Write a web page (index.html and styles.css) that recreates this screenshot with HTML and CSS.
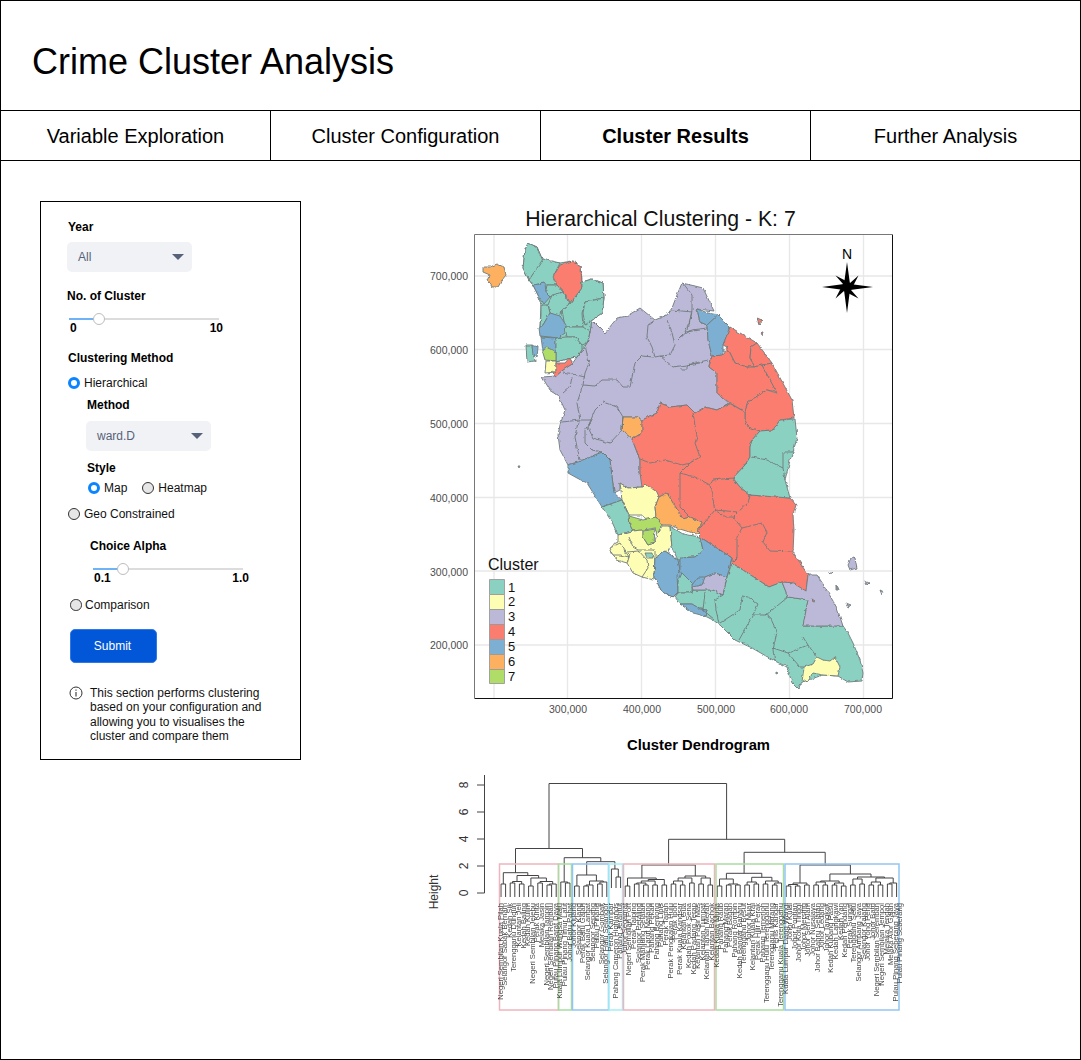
FILE: index.html
```html
<!DOCTYPE html>
<html lang="en">
<head>
<meta charset="utf-8">
<title>Crime Cluster Analysis</title>
<link rel="stylesheet" href="styles.css">
</head>
<body>
<div class="frame">
  <header class="header"><h1>Crime Cluster Analysis</h1></header>
  <nav class="tabs">
    <a class="tab">Variable Exploration</a>
    <a class="tab">Cluster Configuration</a>
    <a class="tab active">Cluster Results</a>
    <a class="tab">Further Analysis</a>
  </nav>
  <main class="main">
    <aside class="side">
      <div class="label nudge">Year</div>
      <div class="select mt8"><span>All</span><i class="caret"></i></div>
      <div class="label mt17 tight">No. of Cluster</div>
      <div class="slider mt10"><div class="fill"></div><div class="knob"></div></div>
      <div class="range"><span>0</span><span>10</span></div>
      <div class="label mt16 nudge">Clustering Method</div>
      <div class="radio-row mt11 nudge"><span class="radio on"></span>Hierarchical</div>
      <div class="indent">
        <div class="label mt8">Method</div>
        <div class="select mt9 shift"><span>ward.D</span><i class="caret"></i></div>
        <div class="label mt10">Style</div>
        <div class="radio-pair mt6">
          <div class="radio-row"><span class="radio on"></span>Map</div>
          <div class="radio-row"><span class="radio"></span>Heatmap</div>
        </div>
      </div>
      <div class="radio-row mt12 nudge"><span class="radio"></span>Geo Constrained</div>
      <div class="alpha">
        <div class="label mt18">Choice Alpha</div>
        <div class="slider mt10 short"><div class="fill"></div><div class="knob"></div></div>
        <div class="range short"><span>0.1</span><span>1.0</span></div>
      </div>
      <div class="radio-row mt13 nudge2"><span class="radio small"></span>Comparison</div>
      <button class="submit mt17" type="button">Submit</button>
      <div class="info mt23">
        <svg class="info-icon" viewBox="0 0 14 14" width="14" height="14"><circle cx="7" cy="7" r="6" fill="none" stroke="#333" stroke-width="1"/><path d="M7 6v4.4M7 3.6v1.2" stroke="#333" stroke-width="1.1" fill="none"/></svg>
        <p>This section performs clustering based on your configuration and allowing you to visualises the cluster and compare them</p>
      </div>
    </aside>
    <section class="charts">
      <svg class="map" viewBox="420 201 500 529" width="500" height="529">
        <defs>
          <filter id="rough" filterUnits="userSpaceOnUse" x="474" y="234" width="418" height="464" color-interpolation-filters="sRGB">
            <feTurbulence type="fractalNoise" baseFrequency="0.22" numOctaves="2" seed="4" result="n"/>
            <feDisplacementMap in="SourceGraphic" in2="n" scale="3.2" xChannelSelector="R" yChannelSelector="G"/>
          </filter>
        </defs>
        <text class="map-title" x="660.5" y="226" text-anchor="middle">Hierarchical Clustering - K: 7</text>
        <rect class="plot-bg" x="474.5" y="234.5" width="418" height="464"/>
        <path class="grid" d="M494 235V698M567.5 235V698M641.5 235V698M715.5 235V698M789.5 235V698M863.5 235V698M475 276H892M475 349.5H892M475 423.5H892M475 497.5H892M475 571H892M475 645H892"/>
        <path class="tick-line" d="M474.5 698V234.5H892"/>
        <path class="axis-line" d="M474.5 698.5H892.5V234.5"/>
        <g class="ticks-y">
          <text x="468" y="280">700,000</text><text x="468" y="354">600,000</text><text x="468" y="428">500,000</text><text x="468" y="502">400,000</text><text x="468" y="576">300,000</text><text x="468" y="649">200,000</text>
        </g>
        <g class="ticks-x">
          <text x="568" y="713">300,000</text><text x="642" y="713">400,000</text><text x="716" y="713">500,000</text><text x="789" y="713">600,000</text><text x="863" y="713">700,000</text>
        </g>
        <g class="regions" filter="url(#rough)">
          <polygon class="c3" points="592,320 605,333 617,318 627,316 640,308 655,320 667,315 672,308 677,295 682,283 695,286 703,288 714,311 697,309 700,322 707,325 708,340 712,356 709,367 717,373 717,393 729,403 717,410 705,407 695,413 687,405 670,407 660,403 657,413 642,420 638,417 623,417 622,430 632,439 640,460 640,473 645,483 642,487 628,488 620,483 620,490 614,493 610,460 602,452 578,462 568,465 560,450 558,435 560,425 565,410 558,395 550,390 542,377 556,376 563,370 572,364 577,357 582,350 587,343 590,332"/>
          <polygon class="c1" points="528,243 537,247 543,261 560,263 572,261 581,266 582,282 592,279 603,283 604,298 602,313 592,320 590,332 587,343 582,350 577,357 570,358 556,362 556,352 541,337 540,327 541,305 538,295 533,285 529,280 523,268 525,250"/>
          <polygon class="c6" points="483,267 490,267 497,264 504,267 506,275 502,280 498,287 492,287 488,280 490,275 483,272"/>
          <polygon class="c1" points="528,243 537,247 543,261 529,280 523,268 525,250"/>
          <polygon class="c1" points="543,259 560,263 554,275 557,285 547,285 545,283 533,285 529,280"/>
          <polygon class="c4" points="572,261 581,266 582,288 570,304 565,293 558,287 553,277 560,265"/>
          <polygon class="c1" points="582,282 592,279 603,283 604,298 585,302 582,313 583,327 565,327 562,310 570,304 582,288"/>
          <polygon class="c1" points="585,302 604,298 602,313 592,320 585,325 583,313"/>
          <polygon class="c1" points="565,327 583,327 590,332 587,343 582,345 575,337 567,337"/>
          <polygon class="c1" points="547,285 557,285 563,292 552,297 545,295"/>
          <polygon class="c1" points="552,295 564,292 569,304 562,310 560,317 550,313 548,305"/>
          <polygon class="c1" points="541,305 548,305 550,313 543,325 540,327 541,315"/>
          <polygon class="c5" points="533,285 545,283 546,293 550,297 544,304 538,295"/>
          <polygon class="c5" points="550,313 560,316 566,325 565,333 558,338 550,337 540,336 539,328 543,325"/>
          <polygon class="c5" points="541,337 556,338 556,352 545,350 543,352"/>
          <polygon class="c1" points="556,338 566,337 575,337 582,345 582,350 577,357 570,358 556,362"/>
          <polygon class="c1" points="526,345 532,345 535,361 527,362"/>
          <polygon class="c5" points="532,345 538,347 537,357 533,356"/>
          <polygon class="c7" points="546,347 556,352 556,361 545,360 543,353"/>
          <polygon class="c2" points="546,361 556,361 556,372 545,373"/>
          <polygon class="c4" points="570,357 572,364 563,370 556,376 553,373 556,371 556,363 565,363"/>
          <polygon class="c6" points="623,417 638,417 642,422 642,433 632,439 622,430"/>
          <polygon class="c5" points="697,309 708,313 718,315 707,325 700,322"/>
          <polygon class="c5" points="718,315 730,327 723,345 723,355 712,356 708,340 707,325"/>
          <polygon class="c4" points="730,327 757,343 751,347 750,358 755,367 747,367 735,363 727,347 723,345"/>
          <polygon class="c4" points="757,343 772,363 762,365 755,367 750,358 751,347"/>
          <polygon class="c4" points="723,355 727,347 735,363 747,367 755,367 762,365 777,392 767,390 748,402 745,412 730,403 717,393 717,373 709,367 712,356"/>
          <polygon class="c4" points="772,363 792,400 794,418 780,420 773,430 760,431 748,427 745,420 745,412 748,402 767,390 777,393 762,365"/>
          <polygon class="c4" points="632,439 642,433 642,420 657,413 660,403 670,407 687,405 695,413 705,407 717,410 729,403 745,412 745,420 748,427 760,431 752,440 750,447 750,457 745,465 733,478 740,487 750,495 790,498 796,505 793,515 794,530 793,552 808,575 806,592 793,583 782,582 769,587 732,563 732,558 700,537 698,530 702,522 690,517 683,519 673,503 667,493 659,497 645,484 642,487 640,473 640,460"/>
          <polygon class="c1" points="760,431 773,430 780,420 795,419 797,438 793,452 790,460 785,480 790,498 750,495 740,487 733,478 745,465 750,457 750,447 752,440"/>
          <polygon class="c5" points="568,467 568,465 578,462 602,452 610,460 614,493 622,500 602,507 587,483 577,478 568,473"/>
          <polygon class="c2" points="620,483 628,488 642,487 645,484 657,492 659,497 655,507 656,517 647,521 643,515 629,515 622,500 621,490"/>
          <polygon class="c6" points="659,497 667,493 673,503 683,519 690,517 702,522 698,530 700,535 683,530 670,525 662,525 656,517 655,507"/>
          <polygon class="c1" points="602,507 622,500 629,515 630,525 633,531 618,535 612,522"/>
          <polygon class="c7" points="629,516 643,520 656,517 662,525 657,535 655,528 643,530 633,531 630,525"/>
          <polygon class="c2" points="618,535 633,531 643,530 643,537 648,545 654,543 657,535 662,526 670,526 672,545 665,558 655,558 654,580 642,577 633,573 627,563 617,560 612,553 612,545 618,542"/>
          <polygon class="c7" points="643,531 655,529 654,543 648,545 643,537"/>
          <polygon class="c1" points="645,553 652,553 653,558 647,558"/>
          <polygon class="c2" points="610,548 620,543 629,557 620,555 613,555"/>
          <polygon class="c5" points="655,558 665,551 678,560 687,557 695,557 703,550 700,537 732,558 727,577 723,595 713,590 693,590 692,593 678,593 673,597 662,592 657,582 654,578"/>
          <polygon class="c1" points="670,526 683,534 700,537 703,550 695,557 687,557 678,560 672,548"/>
          <polygon class="c5" points="655,558 665,551 678,560 680,570 677,575 678,592 673,597 662,592 657,582 654,578"/>
          <polygon class="c5" points="680,558 695,557 703,550 700,537 732,558 727,577 715,573 705,577 698,577 692,585 685,582 680,570"/>
          <polygon class="c1" points="682,573 692,583 692,593 678,593 678,582"/>
          <polygon class="c1" points="732,563 769,587 782,582 788,597 808,600 803,626 843,626 848,633 853,643 860,660 863,673 862,681 848,682 838,676 823,675 802,682 798,689 792,683 787,667 773,660 752,648 735,640 720,625 713,620 705,616 707,610 700,609 692,604 680,604 675,597 678,593 692,593 693,590 713,590 723,595 727,577"/>
          <polygon class="c3" points="692,587 702,585 705,577 715,573 727,577 723,595 713,590 693,590"/>
          <polygon class="c5" points="680,604 692,604 700,609 707,610 705,616 693,613"/>
          <polygon class="c3" points="782,582 793,583 806,591 808,575 817,575 825,587 837,608 843,626 803,626 808,600 788,597"/>
          <polygon class="c2" points="817,657 823,660 830,661 835,657 840,667 838,676 823,675 813,673 808,680 802,682 804,667 813,664"/>
          <polygon class="c3" points="852,557 855,558 857,568 850,570 848,565"/>
          <polygon class="c4" points="757,318 762,320 759,324"/>
          <polygon class="c4" points="761,332 763,332 762,336"/>
          <polygon class="c3" points="865,581 869,583 867,585"/>
          <polygon class="c3" points="880,590 884,592 882,595"/>
          <polygon class="c3" points="846,603 851,605 848,607"/>
          <polygon class="c3" points="829,573 833,573 831,575"/>
          <polygon class="c3" points="836,585 838,590 836,590"/>
          <polygon class="c3" points="518,466 520,466 519,468"/>
          <polygon class="c1" points="776,672 778,673 776,674"/>
          <polygon class="c4" points="812,599 815,601 813,602"/>
          <path class="inner" d="M585 345L589 363 585 373 583 385M563 372L585 377M572 377L570 387 563 393M583 385L595 386 602 380 617 380 623 387 630 387 635 363 642 356 654 357M655 320L648 325 647 337 652 347 655 357 660 356 670 355 675 345 672 333 667 320M660 356L673 367 687 365 700 363M672 310L692 312 690 320 685 332 677 340M685 332L700 330M683 283L692 295 692 310M583 385L577 403 580 420 562 422M580 420L593 420M603 402L617 407 623 417 622 430 610 443 593 438 588 427 595 410 603 402M578 422L575 437 578 452 580 460M592 420L585 430 585 443 592 450 602 452M680 370L687 370 687 365 708 360M680 337L692 330 707 328M692 310L688 330M693 413L697 437 695 443 700 457 690 463 682 465 665 460 650 463 640 459M680 473L695 477 710 485 713 480 733 478M710 485L715 510 738 512M750 495L748 503 738 512 733 517M733 517L742 528 762 523 767 532 763 542 770 551 793 552M742 528L737 537 737 558 732 563M715 510L700 528M715 510L725 517 733 517M690 463L680 473 680 507 690 517M752 457L767 460 783 468M783 452L795 452M783 452L783 468 785 480M629 537L633 547 638 550 655 550M638 550L647 560 648 568 642 577M627 552L638 551M627 563L630 553M655 558L655 550M723 595L715 600 716 610 719 623M742 596L740 610 720 623M748 597L758 604 753 615 739 640M788 597L766 615 770 617 777 632 773 650 775 662M754 615L766 615M803 637L808 645 817 657M773 648L788 653 800 667 804 667M788 653L808 645M705 592L703 610 715 620M742 596L748 597"/>
        </g>
        <g class="compass">
          <text class="north" x="847" y="259" text-anchor="middle">N</text>
          <polygon points="835.5,275.5 850,283 858.5,275.5 851,290 858.500,298.500 844,291 835.500,298.500 843,284"/>
          <polygon points="847,262 850,284 873,287 850,290 847,313 844,290 822,287 844,284"/>
        </g>
        <g class="legend">
          <text class="legend-title" x="488" y="570">Cluster</text>
          <rect class="c1" x="489.500" y="579.5" width="15" height="15"/>
          <rect class="c2" x="489.500" y="594.5" width="15" height="15"/>
          <rect class="c3" x="489.500" y="609.5" width="15" height="15"/>
          <rect class="c4" x="489.500" y="624.5" width="15" height="15"/>
          <rect class="c5" x="489.500" y="639.5" width="15" height="15"/>
          <rect class="c6" x="489.500" y="654.5" width="15" height="15"/>
          <rect class="c7" x="489.500" y="669.500" width="15" height="14"/>
          <text x="508" y="592">1</text><text x="508" y="606">2</text><text x="508" y="621">3</text><text x="508" y="636">4</text><text x="508" y="651">5</text><text x="508" y="666">6</text><text x="508" y="681">7</text>
        </g>
      </svg>
      <h3 class="dendro-title">Cluster Dendrogram</h3>
      <div class="dendro">
        <svg viewBox="420 760 500 255" width="500" height="255">
          <path class="axis" d="M484.500 775V893M477 785H484.500M477 812H484.500M477 839H484.500M477 866H484.500M477 893H484.500"/>
          <g class="axis-text">
            <text transform="rotate(-90 468 785)" x="468" y="785">8</text>
            <text transform="rotate(-90 468 812)" x="468" y="812">6</text>
            <text transform="rotate(-90 468 839)" x="468" y="839">4</text>
            <text transform="rotate(-90 468 866)" x="468" y="866">2</text>
            <text transform="rotate(-90 468 893)" x="468" y="893">0</text>
            <text transform="rotate(-90 438 892)" x="438" y="892">Height</text>
          </g>
          <path class="tree" d="M501 897V884H505.6V897M510.2 897V883H514.8V897M519.4 897V884H524V897M512.5 883V881.5H521.7V884M528.6 897V886H533.2V897M537.8 897V883H542.4V897M547 897V885H551.6V897M549.3 885V884H556.200V897M540 883V881.5H552.7V884M530.9 886V878H546.4V881.500M517 881.5V875.5H538.6V878M503.3 884V872.7H527.8V875.5M565.4 897V883H570V897M560.8 897V882H567.7V883M574.6 897V886H579.2V897M583.8 897V886H588.4V897M586.1 886V885H593V897M597.6 897V884H602.2V897M599.9 884V882H606.8V897M589.5 885V881H603.3V882M576.9 886V875H596.4V881M611.4 888V869H618.3V877M616 888V877H620.6V888M586.7 875V861.7H614.9V869M564.2 882V857.7H600.8V861.7M515.5 872.7V848.5H582.500V857.7M549 848.5V783.5H726.6V839.3"/>
          <path class="tree" d="M625.2 897V886H629.8V897M634.4 897V884H639V897M643.6 897V885H648.2V897M652.8 897V885H657.4V897M662 897V885H666.6V897M671.2 897V884H675.8V897M680.4 897V885H685V897M689.6 897V883H694.2V897M698.8 897V884H703.4V897M708 897V885H712.6V897M636.7 884V883H645.9V885M641.3 883V881H655.1V885M648.2 881V879.5H664.3V885M627.5 886V878H656.2V879.5M673.500 884V881H682.7V885M678.1 881V878H691.9V883M701.1 884V878H710.3V885M685 878V876H705.7V878M641.9 878V865H695.3V876"/>
          <path class="tree" d="M717.2 897V886H721.8V897M726.4 897V885H731V897M735.6 897V885H740.2V897M744.8 897V885H749.4V897M754 897V884H758.6V897M763.2 897V884H767.8V897M772.4 897V885H777V897M774.7 885V883H781.6V897M728.7 885V884H737.9V885M719.5 886V879H733.3V884M747.1 885V882H756.3V884M765.5 884V881H778.2V883M751.7 882V877.3H771.9V881M726.4 879V873.3H761.8V877.3M786.2 897V886H790.8V897M795.4 897V886H800V897M804.6 897V885H809.2V897M788.5 886V884.500H797.7V886M793.1 884.5V883H806.9V885M813.8 897V885H818.4V897M823 897V885H827.6V897M832.200 897V885H836.8V897M841.4 897V886H846V897M850.6 897V885H855.2V897M859.8 897V884H864.4V897M869 897V885H873.6V897M878.2 897V885H882.8V897M887.4 897V884H892V897M889.7 884V883H896.6V897M816.1 885V882H825.3V885M834.5 885V883H843.7V886M820.7 882V881H839.1V883M852.9 885V879H862.1V884M871.3 885V882H880.5V885M875.900 882V878H893.2V883M857.5 879V877H884.5V878M829.9 881V874H871V877M800 883V865H850.400V874M744.1 873.3V852.3H825.2V865M668.6 865V839.3H784.7V852.3"/>
          <rect class="box pink" x="499.5" y="864" width="59" height="146"/>
          <rect class="box green" x="558.5" y="864" width="13" height="146"/>
          <rect class="box blue" x="572.500" y="864" width="36" height="146"/>
          <rect class="box cyan" x="609" y="864" width="13.500" height="146"/>
          <rect class="box pink" x="623.5" y="864" width="91" height="146"/>
          <rect class="box green" x="716" y="864" width="67.5" height="146"/>
          <rect class="box blue" x="785" y="864" width="114" height="146"/>
        </svg>
        <div class="leaves">
          <span>Negeri Sembilan Kuala Pilah</span><span>Selangor Sabak Bernam</span><span>Kedah Sik</span><span>Terengganu Dungun</span><span>Kelantan Jeli</span><span>Kedah Baling</span><span>Kedah Kulim</span><span>Negeri Sembilan Jelebu</span><span>Perak Kinta</span><span>Melaka Jasin</span><span>Negeri Sembilan Tampin</span><span>Negeri Sembilan Rembau</span><span>Pulau Pinang Barat Daya</span>
          <span>Kuala Lumpur Wangsa Maju</span><span>Pulau Pinang Timur Laut</span><span>Johor Batu Pahat</span>
          <span>Johor Kluang</span><span>Selangor Klang</span><span>Perak Batu Gajah</span><span>Selangor Kuala Langat</span><span>Selangor Sepang</span><span>Pulau Pinang</span><span>Selangor Gombak</span><span>Selangor Hulu Selangor</span>
          <span>Perak Kampar</span><span>Pahang Cameron Highlands</span><span>Pahang Jerantut</span>
          <span>Johor Segamat</span><span>Negeri Sembilan Port</span><span>Perak Taiping</span><span>Selangor Petaling</span><span>Perak Manjung Selatan</span><span>Perak Larut Matang</span><span>Pahang Pekan</span><span>Pahang Bentong</span><span>Pahang Lipis</span><span>Perak Tapah</span><span>Perak Pengkalan Hulu</span><span>Perak Ipoh</span><span>Perak Kuala Kangsar</span><span>Kelantan Gua</span><span>Kedah Pokok Sena</span><span>Kedah Padang Terap</span><span>Kelantan Pasir Mas</span><span>Kelantan Tumpat</span><span>Kelantan Tanah Merah</span><span>Kelantan Bachok</span>
          <span>Kedah Kuala Muda</span><span>Pahang Raub</span><span>Pahang Maran</span><span>Perak Bagan</span><span>Pahang Rompin</span><span>Kedah Bandar Baharu</span><span>Terengganu Besut</span><span>Johor Muar</span><span>Kelantan Kuala Krai</span><span>Perak Hilir Perak</span><span>Pahang Temerloh</span><span>Terengganu Hulu Terengganu</span><span>Terengganu Marang</span><span>Perlis Kangar</span><span>Terengganu Kuala Terengganu</span><span>Kuala Lumpur Dang Wangi</span>
          <span>Johor Kulai</span><span>Johor Pontian</span><span>Johor Kota Tinggi</span><span>Johor Mersing</span><span>Johor Seri Alam</span><span>Johor Nusajaya</span><span>Johor Bahru Selatan</span><span>Johor Ledang</span><span>Johor Tangkak</span><span>Kedah Kubang Pasu</span><span>Kedah Langkawi</span><span>Kedah Yan</span><span>Kedah Pendang</span><span>Perak Sungai</span><span>Terengganu Setiu</span><span>Selangor Ampang Jaya</span><span>Selangor Kajang</span><span>Johor Yong Peng</span><span>Johor Batu</span><span>Negeri Sembilan Seremban</span><span>Negeri Sembilan Jempol</span><span>Melaka Tengah</span><span>Melaka Alor Gajah</span><span>Pulau Pinang Seberang Jaya</span><span>Pulau Pinang Seberang</span>
        </div>
      </div>
    </section>
  </main>
</div>
</body>
</html>
```
FILE: styles.css
```css
* { box-sizing: border-box; }
html, body { margin: 0; padding: 0; background: #fff; }
body { font-family: "Liberation Sans", Arial, sans-serif; color: #000; }
.frame { width: 1081px; height: 1060px; border: 1px solid #000; overflow: hidden; }
.header { height: 110px; border-bottom: 1px solid #000; display: flex; align-items: center; padding-left: 31px; }
.header h1 { margin: 0; font-size: 36px; font-weight: 400; line-height: 42px; position: relative; top: 6px; }
.tabs { display: grid; grid-template-columns: 270px 270px 270px 1fr; height: 50px; border-bottom: 1px solid #000; }
.tab { display: flex; align-items: center; justify-content: center; font-size: 20px; padding-top: 2px; border-right: 1px solid #000; }
.tab:last-child { border-right: 0; }
.tab.active { font-weight: 700; }
.main { display: flex; align-items: flex-start; padding: 40px 0 0 39px; }
.side { width: 261px; flex: none; border: 1px solid #000; padding: 18px 0 15px 26px; font-size: 12px; }
.label { font-weight: 700; font-size: 12px; line-height: 14px; }
.tight { margin-left: 0; }
.nudge { margin-left: 1px; }
.nudge2 { margin-left: 3px; }
.mt6 { margin-top: 6px; } .mt8 { margin-top: 8px; } .mt9 { margin-top: 9px; } .mt10 { margin-top: 10px; }
.mt11 { margin-top: 11px; } .mt12 { margin-top: 12px; } .mt13 { margin-top: 13px; } .mt16 { margin-top: 16px; }
.mt17 { margin-top: 17px; } .mt18 { margin-top: 18px; } .mt23 { margin-top: 23px; }
.select { width: 125px; height: 30px; background: #f1f2f5; border-radius: 5px; display: flex; align-items: center; justify-content: space-between; padding: 0 8px 0 11px; color: #56627a; font-size: 12px; }
.shift { margin-left: -1px; }
.caret { width: 0; height: 0; border-left: 6px solid transparent; border-right: 6px solid transparent; border-top: 6px solid #56627a; }
.slider { position: relative; width: 150px; height: 12px; margin-left: 2px; }
.slider::before { content: ""; position: absolute; left: 0; right: 0; top: 5px; height: 2px; background: #dcdcdc; }
.fill { position: absolute; left: 0; top: 5px; height: 2px; width: 30px; background: #6db3f6; }
.knob { position: absolute; left: 24px; top: 0; width: 12px; height: 12px; border-radius: 50%; background: #fff; border: 1px solid #bdbdbd; }
.range { width: 153px; margin: -4px 0 0 3px; display: flex; justify-content: space-between; font-weight: 700; line-height: 14px; font-size: 12px; }
.indent { margin-left: 20px; }
.radio-row { display: flex; align-items: center; font-size: 12px; line-height: 14px; color: #111; }
.radio-pair { display: flex; gap: 15px; margin-left: 1px; }
.radio { width: 12px; height: 12px; border-radius: 50%; margin-right: 4px; background: #e6e6e6; border: 1.2px solid #333; flex: none; }
.radio.on { background: #fff; border: 3.5px solid #0a84ff; }
.radio.small { width: 11.500px; height: 11.500px; margin-right: 3.5px; }
.alpha { margin-left: 23px; }
.alpha .slider { margin-left: 3px; }
.alpha .range { width: 155px; margin-left: 4px; }
.submit { display: block; width: 87px; height: 34px; margin-left: 3px; background: #0256d8; color: #fff; border: 1px solid #2f78e6; border-radius: 5px; font: 12px "Liberation Sans", Arial, sans-serif; padding: 0 2px 0 0; }
.info { display: flex; align-items: flex-start; gap: 7px; margin-left: 2px; width: 201px; }
.info-icon { flex: none; }
.info p { margin: 0; font-size: 12px; line-height: 14.400px; color: #111; }
.charts { margin-left: 119px; width: 500px; flex: none; }
.map, .dendro svg { display: block; }
.map-title { font-size: 21.25px; fill: #111; }
.plot-bg { fill: #fff; }
.grid { fill: none; stroke: #e8e8e8; stroke-width: 1.4; }
.tick-line { fill: none; stroke: #777; stroke-width: 1; }
.axis-line { fill: none; stroke: #111; stroke-width: 1; }
.ticks-y text, .ticks-x text { font-size: 10.5px; fill: #4d4d4d; }
.ticks-y text { text-anchor: end; }
.ticks-x text { text-anchor: middle; }
.regions polygon, .legend rect { stroke: #6f7b7b; stroke-width: 0.9; stroke-linejoin: round; }
.legend rect { stroke: #9a9a9a; }
.c1 { fill: #8bd1c2; } .c2 { fill: #fdfdb3; } .c3 { fill: #bcb8d8; } .c4 { fill: #fb7d6f; }
.c5 { fill: #7cafd2; } .c6 { fill: #fdb05f; } .c7 { fill: #b0dc68; }
.inner { fill: none; stroke: #6f7b7b; stroke-width: 0.9; stroke-linejoin: round; }
.compass polygon { fill: #000; }
.north { font-size: 14px; fill: #000; }
.legend text { font-size: 13px; fill: #111; }
.legend .legend-title { font-size: 16px; }
.dendro-title { margin: 7px 0 7px; padding-left: 57px; text-align: center; font-size: 14.800px; line-height: 16px; font-weight: 700; }
.dendro { position: relative; width: 500px; height: 255px; }
.axis { fill: none; stroke: #444; stroke-width: 1; }
.axis-text text { font-size: 12px; fill: #333; text-anchor: middle; }
.tree { fill: none; stroke: #444; stroke-width: 1; }
.box { fill: none; stroke-width: 1.5; }
.pink { stroke: #f0b4bf; } .green { stroke: #a9dca0; } .blue { stroke: #92c6f2; } .cyan { stroke: #a5eef6; }
.leaves { position: absolute; left: 78.7px; top: 143px; display: flex; align-items: flex-start; }
.leaves span { display: block; width: 4.6px; flex: none; writing-mode: vertical-rl; transform: rotate(180deg); white-space: nowrap; font-size: 7.6px; line-height: 4.6px; color: #4a4a4a; }
```
